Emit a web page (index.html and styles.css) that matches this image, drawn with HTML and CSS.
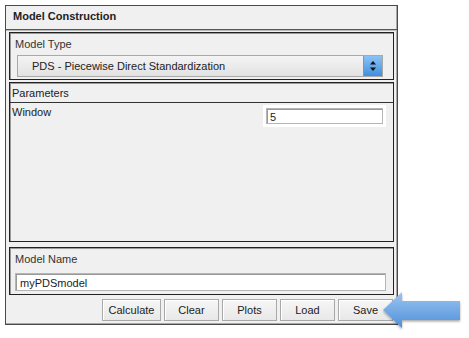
FILE: index.html
```html
<!DOCTYPE html>
<html lang="en">
<head>
<meta charset="UTF-8">
<title>Model Construction</title>
<link rel="stylesheet" href="styles.css">
</head>
<body>
<div class="panel">
	<div class="panelTitle">Model Construction</div>
	<div class="panelBody">
		<div class="group modelType">
			<div class="groupLabel">Model Type</div>
			<div class="combo">
				<span class="comboText">PDS - Piecewise Direct Standardization</span>
				<span class="spinner">
					<svg width="8" height="12" viewBox="0 0 8 12"><polygon points="4,1 7,4.5 1,4.5" fill="#111"/><polygon points="1,7.5 7,7.5 4,11" fill="#111"/></svg>
				</span>
			</div>
		</div>
		<div class="group params">
			<div class="paramsHead">Parameters</div>
			<div class="paramsBody">
				<div class="paramRow">
					<span>Window</span>
					<span class="fieldRim"><input class="field small" type="text" value="5" /></span>
				</div>
			</div>
		</div>
		<div class="group modelName">
			<div class="groupLabel">Model Name</div>
			<input class="field wide" type="text" value="myPDSmodel" />
		</div>
		<div class="controlButtons">
			<button>Calculate</button>
			<button>Clear</button>
			<button>Plots</button>
			<button>Load</button>
			<button>Save</button>
		</div>
	</div>
</div>
<svg class="arrow" width="84" height="44" viewBox="0 0 84 44">
	<defs>
		<linearGradient id="arrowFill" x1="0" y1="0" x2="0" y2="1">
			<stop offset="0" stop-color="#9cc6f2"/>
			<stop offset="1" stop-color="#4f8fd8"/>
		</linearGradient>
		<filter id="arrowShadow" x="-20%" y="-20%" width="140%" height="150%">
			<feDropShadow dx="0" dy="1.5" stdDeviation="1.2" flood-color="#000" flood-opacity="0.35"/>
		</filter>
	</defs>
	<polygon points="3,20 22,2 22,11 80,11 80,30 22,30 22,38" fill="url(#arrowFill)" filter="url(#arrowShadow)"/>
</svg>
</body>
</html>
```

FILE: styles.css
```css
html, body {
	margin: 0px;
	padding: 0px;
	background: #fff;
	font-size: 11px;
	font-family: "Liberation Sans", Arial, sans-serif;
	color: #222;
}
body {
	position: relative;
	width: 469px;
	height: 338px;
}
.panel {
	margin: 5px 0 0 5px;
	width: 391px;
	height: 318px;
	border: 1px solid #4a4a4a;
	box-shadow: inset -1px -1px 0 #a8a8a8;
	background: #f0f0f0;
	display: flex;
	flex-direction: column;
}
.panelTitle {
	height: 23px;
	line-height: 21px;
	padding-left: 7px;
	font-weight: bold;
	border-bottom: 1px solid #555;
	box-shadow: 0 1px 0 #bbb;
}
.panelBody {
	flex: 1;
	padding: 2px 3px 0 3px;
	display: flex;
	flex-direction: column;
}
.group {
	border: 1px solid #222;
	box-shadow: inset 1px 1px 0 #9a9a9a;
	background: #f0f0f0;
}
.groupLabel {
	padding: 4px 0 0 5px;
	height: 15px;
	line-height: 15px;
	color: #333;
}
.modelType {
	height: 46px;
}
.combo {
	margin: 3px 10px 0 7px;
	height: 20px;
	border: 1px solid #a9a9a9;
	background: linear-gradient(#f4f4f4, #e2e2e2);
	display: flex;
	align-items: center;
}
.comboText {
	flex: 1;
	padding-left: 14px;
	color: #222;
}
.spinner {
	width: 18px;
	height: 20px;
	background: linear-gradient(#8cc2f4, #3f8fe0);
	border-left: 1px solid #6a9bd0;
	display: flex;
	align-items: center;
	justify-content: center;
}
.params {
	margin-top: 2px;
	height: 158px;
	display: flex;
	flex-direction: column;
}
.paramsHead {
	height: 19px;
	line-height: 20px;
	padding-left: 2px;
	border-bottom: 1px solid #333;
}
.paramsBody {
	flex: 1;
	padding: 1px 7px 0 2px;
}
.paramRow {
	display: flex;
	justify-content: space-between;
	align-items: flex-start;
	line-height: 16px;
}
.fieldRim {
	margin-top: 1px;
	padding: 3px;
	background: #fff;
}
.field {
	box-sizing: border-box;
	border: 1px solid #b5b5b5;
	box-shadow: inset 1px 1px 0 #999;
	background: #fff;
	font-family: "Liberation Sans", Arial, sans-serif;
	font-size: 11px;
	color: #222;
	padding: 1px 3px 0 3px;
	margin: 0;
	outline: none;
}
.small {
	width: 117px;
	height: 16px;
	display: block;
}
.modelName {
	margin-top: 5px;
	height: 46px;
}
.wide {
	margin: 6px 0 0 5px;
	width: 371px;
	height: 18px;
	padding-left: 4px;
}
.controlButtons {
	margin-top: 4px;
	padding-right: 1px;
	display: flex;
	justify-content: flex-end;
	gap: 3px;
}
.controlButtons button {
	height: 22px;
	width: 55px;
	padding: 0;
	border: 1px solid #a9a9a9;
	box-shadow: inset 1px 1px 0 #fff;
	background: linear-gradient(#f6f6f6, #e8e8e8);
	font-family: "Liberation Sans", Arial, sans-serif;
	font-size: 11px;
	color: #222;
}
.controlButtons button:first-child {
	width: 59px;
}
.arrow {
	position: absolute;
	left: 380px;
	top: 290px;
}
```
